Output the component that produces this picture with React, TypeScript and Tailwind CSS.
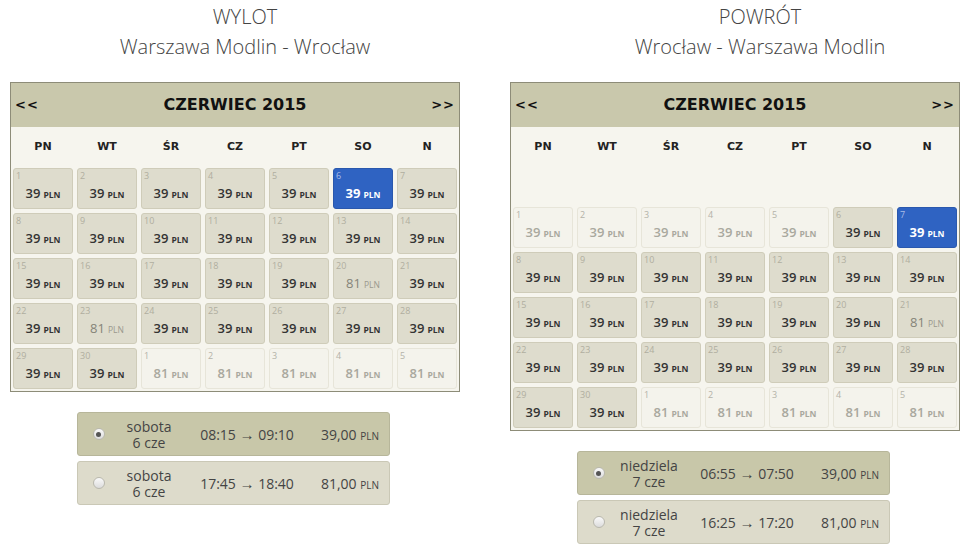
import React from 'react';

type DayCell = {
  day: number;
  price: number;
  state: 'open' | 'off' | 'selected';
};

type Flight = {
  weekday: string;
  date: string;
  from: string;
  to: string;
  price: string;
  checked: boolean;
};

const dayNames = ['PN', 'WT', 'ŚR', 'CZ', 'PT', 'SO', 'N'];

// builds June 2015 (starts on Monday) followed by the first days of July
const buildMonth = (
  cheap: (d: number) => boolean,
  selected: number,
  disabledBefore: number
): DayCell[] => {
  const cells: DayCell[] = [];
  for (let d = 1; d <= 30; d++) {
    cells.push({
      day: d,
      price: cheap(d) ? 39 : 81,
      state: d === selected ? 'selected' : d < disabledBefore ? 'off' : 'open',
    });
  }
  for (let d = 1; d <= 5; d++) {
    cells.push({ day: d, price: 81, state: 'off' });
  }
  return cells;
};

const outbound = buildMonth((d) => d !== 20 && d !== 23, 6, 0);
const inbound = buildMonth((d) => d !== 21, 7, 6);

const outboundFlights: Flight[] = [
  { weekday: 'sobota', date: '6 cze', from: '08:15', to: '09:10', price: '39,00', checked: true },
  { weekday: 'sobota', date: '6 cze', from: '17:45', to: '18:40', price: '81,00', checked: false },
];

const inboundFlights: Flight[] = [
  { weekday: 'niedziela', date: '7 cze', from: '06:55', to: '07:50', price: '39,00', checked: true },
  { weekday: 'niedziela', date: '7 cze', from: '16:25', to: '17:20', price: '81,00', checked: false },
];

const Cell: React.FC<{ cell: DayCell }> = ({ cell }) => {
  const cheap = cell.price === 39;
  let box = 'bg-[#dedccd] border-[#cfccb9]';
  let num = 'text-[#b0ae9f]';
  let price = cheap ? 'text-[#333] font-semibold' : 'text-[#858478] font-normal';
  let pln = cheap ? 'text-[#333] font-bold' : 'text-[#9a998d] font-normal';

  if (cell.state === 'off') {
    box = 'bg-[#f4f3ec] border-[#e7e5d9]';
    num = 'text-[#b3b2a8]';
    price = 'text-[#a9a89e] font-semibold';
    pln = 'text-[#a9a89e] font-bold';
  } else if (cell.state === 'selected') {
    box = 'bg-[#2f63c2] border-[#2a58ad]';
    num = 'text-[#a9bde6]';
    price = 'text-white font-bold';
    pln = 'text-white font-bold';
  }

  return (
    <div className={`h-[41px] rounded-[3px] border flex flex-col ${box}`}>
      <div className={`text-[9px] leading-[10px] pl-[2px] pt-[2px] ${num}`}>{cell.day}</div>
      <div className="flex-1 flex items-center justify-center pb-[1px]">
        <span className={`text-[13px] ${price}`}>{cell.price}</span>
        <span className={`text-[8.5px] ml-[3px] mt-[2px] ${pln}`}>PLN</span>
      </div>
    </div>
  );
};

const Calendar: React.FC<{ cells: DayCell[]; spacer?: boolean }> = ({ cells, spacer }) => (
  <div className="w-[450px] border border-[#8d8c78] bg-[#f6f5ee]">
    <div className="h-[44px] bg-[#c9c8ac] flex items-center justify-between px-[4px] font-['DejaVu_Sans',sans-serif] text-[#111]">
      <span className="text-[13px] font-bold tracking-[1px]">&lt;&lt;</span>
      <span className="text-[16px] font-bold">CZERWIEC 2015</span>
      <span className="text-[13px] font-bold tracking-[1px]">&gt;&gt;</span>
    </div>
    <div className="px-[2px] pb-[2px]">
      <div className="grid grid-cols-7 gap-x-[4px] h-[41px] items-center font-['DejaVu_Sans',sans-serif] text-[11px] font-bold text-[#222]">
        {dayNames.map((n) => (
          <div key={n} className="text-center">
            {n}
          </div>
        ))}
      </div>
      {spacer && <div className="h-[39px]" />}
      <div className="grid grid-cols-7 gap-x-[4px] gap-y-[4px]">
        {cells.map((c, i) => (
          <Cell key={i} cell={c} />
        ))}
      </div>
    </div>
  </div>
);

const Radio: React.FC<{ checked: boolean }> = ({ checked }) => (
  <div className="w-[12px] h-[12px] rounded-full border border-[#b9b8ae] bg-gradient-to-b from-[#fafafa] to-[#dcdcdc] flex items-center justify-center">
    {checked && <div className="w-[5px] h-[5px] rounded-full bg-[#555]" />}
  </div>
);

const FlightRow: React.FC<{ flight: Flight }> = ({ flight }) => (
  <div
    className={`w-[313px] h-[44px] rounded-[3px] border flex items-center text-[#444] text-[14px] ${
      flight.checked ? 'bg-[#c8c7a9] border-[#b7b69a]' : 'bg-[#dddbcb] border-[#cac8b6]'
    }`}
  >
    <div className="w-[40px] flex justify-center pl-[1px]">
      <Radio checked={flight.checked} />
    </div>
    <div className="w-[62px] text-center">
      <div className="leading-[16px]">{flight.weekday}</div>
      <div className="leading-[15px]">{flight.date}</div>
    </div>
    <div className="w-[134px] text-center">
      {flight.from} <span className="text-[15px]">→</span> {flight.to}
    </div>
    <div className="flex-1 text-right pr-[10px]">
      {flight.price} <span className="text-[10px] uppercase">PLN</span>
    </div>
  </div>
);

const Leg: React.FC<{
  title: string;
  route: string;
  cells: DayCell[];
  flights: Flight[];
  spacer?: boolean;
  titlePad: string;
}> = ({ title, route, cells, flights, spacer, titlePad }) => (
  <div className="w-[450px] flex flex-col">
    <div className={`text-center text-[#444] text-[20px] font-light leading-[30px] pt-[2px] ${titlePad}`}>
      <div>{title}</div>
      <div>{route}</div>
    </div>
    <div className="mt-[20px]">
      <Calendar cells={cells} spacer={spacer} />
    </div>
    <div className="mt-[20px] flex flex-col items-center gap-[5px] pr-[3px]">
      {flights.map((f, i) => (
        <FlightRow key={i} flight={f} />
      ))}
    </div>
  </div>
);

const App: React.FC = () => {
  return (
    <div className="w-[974px] h-[554px] bg-white font-['Open_Sans',sans-serif] flex gap-[50px] pl-[10px] overflow-hidden">
      <Leg
        title="WYLOT"
        route="Warszawa Modlin - Wrocław"
        cells={outbound}
        flights={outboundFlights}
        titlePad="pl-[20px]"
      />
      <Leg
        title="POWRÓT"
        route="Wrocław - Warszawa Modlin"
        cells={inbound}
        flights={inboundFlights}
        spacer
        titlePad="pl-[50px]"
      />
    </div>
  );
};

export default App;
